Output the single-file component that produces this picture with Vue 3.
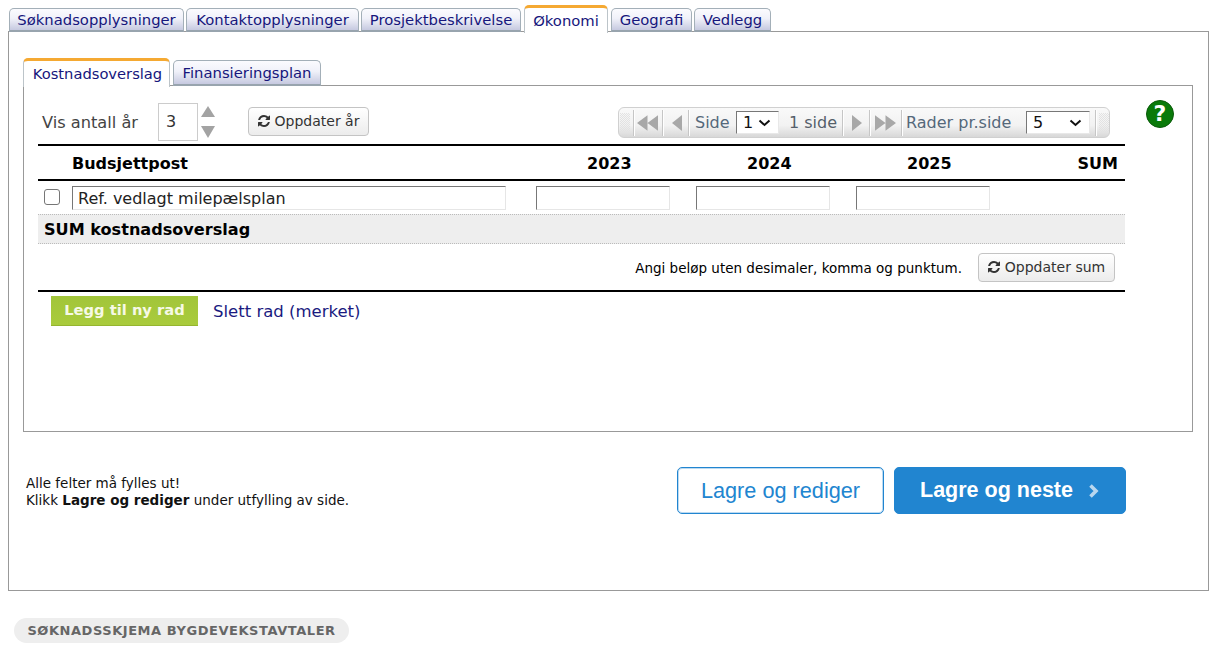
<script setup>
const tabs = [
  { label: 'Søknadsopplysninger', w: 175 },
  { label: 'Kontaktopplysninger', w: 173 },
  { label: 'Prosjektbeskrivelse', w: 160 },
  { label: 'Økonomi', w: 84, active: true },
  { label: 'Geografi', w: 81 },
  { label: 'Vedlegg', w: 77 },
]
const refreshPath = 'M1511 1056q0 5-1 7-64 268-268 434.5t-478 166.5q-146 0-282.5-55t-243.5-157l-129 129q-19 19-45 19t-45-19-19-45v-448q0-26 19-45t45-19h448q26 0 45 19t19 45-19 45l-137 137q71 66 161 102t187 36q134 0 250-65t186-179q11-17 53-117 8-23 30-23h192q13 0 22.5 9.5t9.5 22.5zm25-800v448q0 26-19 45t-45 19h-448q-26 0-45-19t-19-45 19-45l138-138q-148-137-349-137-134 0-250 65t-186 179q-11 17-53 117-8 23-30 23h-199q-13 0-22.5-9.5t-9.5-22.5v-7q65-268 270-434.5t480-166.5q146 0 284 55.5t245 156.5l130-129q19-19 45-19t45 19 19 45z'
const years = ['2023', '2024', '2025']
</script>

<template>
  <div class="page">
    <nav class="tabs">
      <a v-for="t in tabs" :key="t.label" class="tab" :class="{ active: t.active }" :style="{ width: t.w + 'px' }">{{ t.label }}</a>
    </nav>
    <section class="outer">
      <nav class="subtabs">
        <a class="subtab active">Kostnadsoverslag</a>
        <a class="subtab">Finansieringsplan</a>
      </nav>
      <div class="inner">
        <div class="content">
          <div class="toolbar">
            <span class="vis">Vis antall år</span>
            <span class="yearbox">3</span>
            <span class="spin">
              <svg width="16" height="34" viewBox="0 0 16 34"><path d="M8 1 15 12H1Z" fill="#a3a3a3"/><path d="M1 21H15L8 33Z" fill="#a3a3a3"/></svg>
            </span>
            <button class="btn upd-year">
              <svg class="ref" viewBox="0 0 1792 1792"><path :d="refreshPath"/></svg>Oppdater år
            </button>
            <div class="pager">
              <i class="grip"></i>
              <i class="sep"></i>
              <span class="pbtn w2"><svg width="21" height="16" viewBox="0 0 22 16"><path d="M11 0V16L0 8ZM22 0V16L11 8Z" fill="#a8a8a8"/></svg></span>
              <i class="sep"></i>
              <span class="pbtn w1"><svg width="10" height="16" viewBox="0 0 10 16"><path d="M10 0V16L0 8Z" fill="#a8a8a8"/></svg></span>
              <i class="sep"></i>
              <span class="plabel side">Side</span>
              <span class="sel sel1">1<svg width="13" height="8" viewBox="0 0 13 8"><path d="M1.5 1.5 6.5 6 11.5 1.5" fill="none" stroke="#111" stroke-width="2"/></svg></span>
              <span class="plabel count">1 side</span>
              <i class="sep"></i>
              <span class="pbtn w1b"><svg width="10" height="16" viewBox="0 0 10 16"><path d="M0 0V16L10 8Z" fill="#a8a8a8"/></svg></span>
              <i class="sep"></i>
              <span class="pbtn w2b"><svg width="21" height="16" viewBox="0 0 22 16"><path d="M0 0V16L11 8ZM11 0V16L22 8Z" fill="#a8a8a8"/></svg></span>
              <i class="sep"></i>
              <span class="plabel rader">Rader pr.side</span>
              <span class="sel sel2">5<svg width="13" height="8" viewBox="0 0 13 8"><path d="M1.5 1.5 6.5 6 11.5 1.5" fill="none" stroke="#111" stroke-width="2"/></svg></span>
              <i class="sep last"></i>
              <i class="grip end"></i>
            </div>
          </div>

          <div class="row head">
            <span></span>
            <span class="post">Budsjettpost</span>
            <span v-for="y in years" :key="y" class="yr">{{ y }}</span>
            <span class="sum">SUM</span>
          </div>
          <div class="row body">
            <span class="cb"><span class="check"></span></span>
            <span class="field wide">Ref. vedlagt milepælsplan</span>
            <span v-for="y in years" :key="y" class="field num"></span>
            <span></span>
          </div>
          <div class="sumrow">SUM kostnadsoverslag</div>
          <div class="note">
            <span>Angi beløp uten desimaler, komma og punktum.</span>
            <button class="btn upd-sum">
              <svg class="ref" viewBox="0 0 1792 1792"><path :d="refreshPath"/></svg>Oppdater sum
            </button>
          </div>
          <div class="actions">
            <a class="add">Legg til ny rad</a>
            <a class="del">Slett rad (merket)</a>
          </div>
        </div>
        <span class="help">?</span>
      </div>
      <div class="foot">
        <p class="hint">Alle felter må fylles ut!<br>Klikk <b>Lagre og rediger</b> under utfylling av side.</p>
        <div class="savebtns">
          <a class="save ghost">Lagre og rediger</a>
          <a class="save solid">Lagre og neste
            <svg width="12" height="16" viewBox="0 0 12 16"><path d="M2.5 2.5 8 8 2.5 13.5" fill="none" stroke="#b9d7ef" stroke-width="3.6"/></svg>
          </a>
        </div>
      </div>
    </section>
    <div class="crumb">SØKNADSSKJEMA BYGDEVEKSTAVTALER</div>
  </div>
</template>

<style>
html, body { margin: 0; background: #fff; }
</style>

<style scoped>
.page { width: 1225px; height: 656px; padding: 0 0 0 8px; box-sizing: border-box; font-family: "DejaVu Sans", Verdana, sans-serif; color: #000; overflow: hidden; }

.tabs { display: flex; gap: 2px; height: 32px; padding: 5px 0 0 1px; box-sizing: border-box; align-items: flex-end; position: relative; z-index: 1; }
.tab, .subtab { box-sizing: border-box; display: block; text-align: center; color: #16167c; border: 1px solid #a3afb8; border-bottom: 2px solid #98a4ae; border-radius: 5px 5px 0 0; background: linear-gradient(#fbfbfe, #f0f1f9 45%, #c6c9e0); white-space: nowrap; }
.tab { height: 24px; font-size: 14.8px; line-height: 22px; }
.tab.active { height: 28px; margin-bottom: -1px; margin-left: 1px; background: #fff; border: 1px solid #bcc4c9; border-top: 3px solid #f5a932; border-bottom: 0; line-height: 25px; color: #16167c; }
.tab.active + .tab { margin-left: 1px; }

.outer { width: 1201px; height: 560px; box-sizing: border-box; border: 1px solid #999; margin-top: -1px; padding: 25px 14px 0; }
.subtabs { display: flex; gap: 3px; height: 29px; align-items: flex-end; position: relative; z-index: 1; }
.subtab { height: 26px; width: 148px; font-size: 14.8px; line-height: 24px; }
.subtab.active { width: 147px; height: 29px; margin-bottom: -1px; background: #fff; border: 1px solid #bcc4c9; border-top: 3px solid #f5a932; border-bottom: 0; line-height: 25px; padding-left: 2px; font-size: 14.7px; }

.inner { width: 1170px; height: 347px; box-sizing: border-box; border: 1px solid #999; margin-top: -1px; position: relative; padding: 0 0 0 14px; }
.content { width: 1087px; }

.toolbar { height: 58px; display: flex; align-items: flex-start; position: relative; font-size: 16px; color: #444; }
.vis { margin: 27px 0 0 4px; width: 116px; line-height: 20px; font-size: 16.2px; }
.yearbox { box-sizing: border-box; width: 40px; height: 38px; margin-top: 17px; border: 1px solid #ccc; color: #333; line-height: 36px; padding-left: 7px; }
.spin { margin: 19px 0 0 2px; width: 16px; height: 34px; }
.spin svg { display: block; }
.btn { box-sizing: border-box; height: 29px; border: 1px solid #c4c4c4; border-radius: 4px; background: linear-gradient(#fff, #ececec); font: 14px "DejaVu Sans", Verdana, sans-serif; color: #333; display: flex; align-items: center; justify-content: center; padding: 0 0 2px; gap: 3px; }
.ref { width: 14px; height: 14px; fill: #333; flex: none; }
.upd-year { width: 121px; margin: 21px 0 0 32px; }

.pager { position: absolute; left: 580px; top: 21px; width: 492px; height: 31px; box-sizing: border-box; border: 1px solid #d0d0d0; border-radius: 6px; background: linear-gradient(#f9f9f9, #f2f2f2 60%, #d8d8d8); display: flex; align-items: center; }
.grip { width: 14px; height: 20px; flex: none; background: repeating-conic-gradient(#e2e2e2 0 25%, transparent 0 50%) 2px 0 / 2px 2px no-repeat; background-size: 2px 2px; background-repeat: repeat; background-clip: content-box; padding: 0 3px 0 1px; box-sizing: border-box; }
.grip.end { width: 11px; margin-left: 2px; padding: 0 0 0 1px; }
.sep { width: 1px; height: 26px; background: #c6c6c6; box-shadow: 1px 0 0 #fff; flex: none; }
.sep.last { margin-left: 5px; }
.pbtn { display: flex; align-items: center; flex: none; }
.pbtn svg { display: block; }
.pbtn.w2 { width: 28px; padding-left: 3px; box-sizing: border-box; }
.pbtn.w1 { width: 25px; padding-left: 9px; box-sizing: border-box; }
.pbtn.w1b { width: 26px; padding-left: 9px; box-sizing: border-box; }
.pbtn.w2b { width: 31px; padding-left: 5px; box-sizing: border-box; }
.plabel { font-size: 16px; color: #55687a; line-height: 20px; white-space: nowrap; }
.plabel.side { margin-left: 6px; width: 41px; }
.plabel.count { margin-left: 10px; width: 53px; color: #555f6a; }
.plabel.rader { margin-left: 4px; width: 120px; }
.sel { box-sizing: border-box; height: 23px; background: #fff; border: 1px solid #777; border-right-color: #e8e8e8; border-bottom-color: #e8e8e8; font-size: 16px; color: #111; line-height: 21px; padding-left: 6px; display: flex; align-items: center; justify-content: space-between; padding-right: 7px; flex: none; }
.sel1 { width: 43px; }
.sel2 { width: 64px; }

.row { display: grid; grid-template-columns: 34px 464px 160px 160px 160px 109px; box-sizing: border-box; }
.head { height: 37px; border-top: 2px solid #000; border-bottom: 2px solid #000; align-items: center; font-size: 16px; font-weight: 700; line-height: 35px; }
.yr { padding-left: 51px; }
.sum { text-align: right; padding-right: 7px; }
.body { height: 33px; align-items: start; padding-top: 5px; }
.cb { display: block; padding: 3px 0 0 6px; }
.check { display: block; box-sizing: border-box; width: 16px; height: 16px; border: 1px solid #767676; border-radius: 3px; background: #fff; }
.field { display: block; box-sizing: border-box; height: 24px; background: #fff; border: 1px solid #e6e6e6; border-top-color: #777; border-left-color: #777; }
.wide { width: 434px; font-size: 16px; line-height: 23px; padding-left: 5px; color: #222; }
.num { width: 134px; }
.sumrow { box-sizing: border-box; height: 30px; background: #eee; border-top: 1px dotted #bbb; border-bottom: 1px dotted #bbb; font-size: 16.1px; font-weight: 700; line-height: 30px; padding-left: 6px; }
.note { box-sizing: border-box; height: 48px; border-bottom: 2px solid #000; display: flex; align-items: flex-start; justify-content: flex-end; padding: 9px 10px 0 0; font-size: 13.5px; }
.note span { margin: 7px 16px 0 0; line-height: 16px; }
.upd-sum { width: 137px; }
.actions { display: flex; align-items: flex-start; padding: 4px 0 0 13px; }
.add { box-sizing: border-box; width: 147px; height: 30px; background: linear-gradient(#a2c53a, #a9cb3c); border-bottom: 1px solid #95b52f; color: #f6f9e6; font-weight: 700; font-size: 14.7px; line-height: 27px; text-align: center; }
.del { margin: 6px 0 0 15px; font-size: 16.5px; line-height: 20px; color: #1a1a80; }
.help { position: absolute; left: 1122px; top: 14px; width: 28px; height: 28px; border-radius: 50%; background: #0a7a0a; border: 1px solid #0a5a0a; box-sizing: border-box; color: #fff; font: 700 22px/26px "DejaVu Sans", sans-serif; text-align: center; }

.foot { position: relative; }
.hint { margin: 0; position: absolute; left: 3px; top: 43px; font-size: 13.5px; line-height: 17px; color: #111; }
.savebtns { position: absolute; left: 654px; top: 35px; display: flex; gap: 10px; font-family: "Liberation Sans", Arial, sans-serif; }
.save { box-sizing: border-box; height: 47px; border-radius: 5px; font-size: 21.7px; line-height: 45px; text-align: center; border: 1px solid #2185d0; }
.ghost { width: 207px; color: #2185d0; background: #fff; box-shadow: inset 0 0 0 1px rgba(33, 133, 208, .3); }
.solid { width: 232px; color: #fff; background: #2185d0; font-weight: 700; font-size: 21.5px; display: flex; align-items: center; justify-content: center; gap: 15px; }

.crumb { margin: 27px 0 0 6px; box-sizing: border-box; width: 335px; height: 25px; border-radius: 13px; background: #eee; color: #666; font-weight: 700; font-size: 13px; line-height: 25px; text-align: center; letter-spacing: 0.55px; white-space: nowrap; }
</style>
